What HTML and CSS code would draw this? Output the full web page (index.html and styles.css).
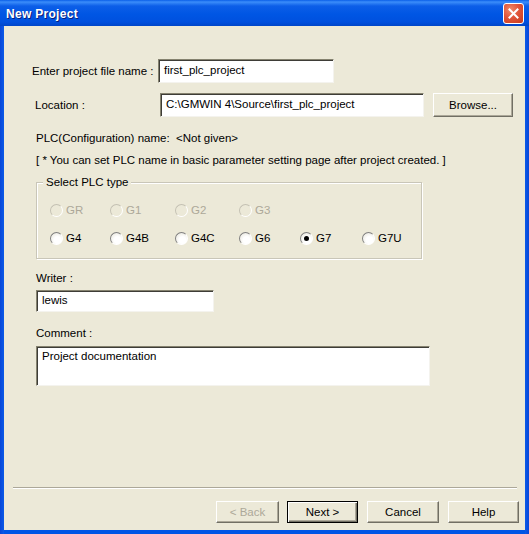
FILE: index.html
```html
<!DOCTYPE html>
<html>
<head>
<meta charset="utf-8">
<link rel="stylesheet" href="styles.css">
</head>
<body>
<div class="window">
  <div class="titlebar">
    <span class="title">New Project</span>
    <span class="close"><svg width="13" height="13" viewBox="0 0 13 13"><path d="M2.5 2.5 L10.5 10.5 M10.5 2.5 L2.5 10.5" stroke="#fff" stroke-width="2" stroke-linecap="square"/></svg></span>
  </div>
  <div class="client">
    <div class="main">
      <div class="row row1">
        <span class="lbl lbl1">Enter project file name :</span>
        <div class="field f1">first_plc_project</div>
      </div>
      <div class="row row2">
        <span class="lbl lbl2">Location :</span>
        <div class="field f2">C:\GMWIN 4\Source\first_plc_project</div>
        <div class="btn browse">Browse...</div>
      </div>
      <div class="text t1">PLC(Configuration) name:&nbsp;&nbsp;&lt;Not given&gt;</div>
      <div class="text t2">[ * You can set PLC name in basic parameter setting page after project created. ]</div>
      <div class="group">
        <div class="legend">Select PLC type</div>
        <div class="radios">
          <div class="opt dis"><span class="rb"></span>GR</div>
          <div class="opt dis"><span class="rb"></span>G1</div>
          <div class="opt dis"><span class="rb"></span>G2</div>
          <div class="opt dis"><span class="rb"></span>G3</div>
          <div class="opt"></div>
          <div class="opt"></div>
          <div class="opt"><span class="rb"></span>G4</div>
          <div class="opt"><span class="rb"></span>G4B</div>
          <div class="opt"><span class="rb"></span>G4C</div>
          <div class="opt"><span class="rb"></span>G6</div>
          <div class="opt"><span class="rb on"></span>G7</div>
          <div class="opt"><span class="rb"></span>G7U</div>
        </div>
      </div>
      <div class="text t3">Writer :</div>
      <div class="field f3">lewis</div>
      <div class="text t4">Comment :</div>
      <div class="field f4">Project documentation</div>
    </div>
    <div class="footer">
      <div class="sep"></div>
      <div class="buttons">
        <div class="btn b-back dis">&lt; Back</div>
        <div class="btn b-next">Next &gt;</div>
        <div class="btn b-cancel">Cancel</div>
        <div class="btn b-help">Help</div>
      </div>
    </div>
  </div>
</div>
</body>
</html>
```

FILE: styles.css
```css
html, body {
  margin: 0;
  padding: 0;
  background: #ece9d8;
}
body {
  font-family: "Liberation Sans", Arial, sans-serif;
  font-size: 11.5px;
  color: #000;
}
.window {
  width: 529px;
  height: 534px;
  display: flex;
  flex-direction: column;
  background: linear-gradient(to right, #0846d8 0, #0a5ae8 4px, transparent 4px, transparent 525px, #0a5ae8 525px, #0846d8 529px);
  background-color: #0055e5;
}
.titlebar {
  height: 26px;
  flex: none;
  display: flex;
  align-items: center;
  justify-content: space-between;
  background: linear-gradient(to bottom, #0a5fe8 0, #3b8dfa 2px, #0c5ee8 6px, #0056e4 14px, #0050de 22px, #0046c8 26px);
  padding: 0 6px 0 6px;
}
.title {
  color: #fff;
  font-family: "Liberation Sans", Arial, sans-serif;
  font-weight: bold;
  font-size: 12px;
  letter-spacing: 0.3px;
  text-shadow: 1px 1px 0 #0a1e7a;
  margin-top: 1px;
}
.close {
  width: 19px;
  height: 19px;
  border: 1px solid #fff;
  border-radius: 3px;
  background: radial-gradient(circle at 35% 30%, #f08a6a 0, #e0553a 45%, #c7391c 100%);
  display: flex;
  align-items: center;
  justify-content: center;
  margin-right: -1px;
}
.client {
  flex: 1;
  margin: 0 4px 4px 4px;
  background: #ece9d8;
  display: flex;
  flex-direction: column;
}
.main {
  flex: 1;
  padding-left: 28px;
}
.row {
  display: flex;
  align-items: center;
  height: 24px;
}
.row1 { margin-top: 33px; }
.row2 { margin-top: 10px; }
.lbl1 { width: 126px; }
.lbl2 { width: 125px; margin-left: 3px; }
.field {
  box-sizing: border-box;
  background: #fff;
  border-top: 1px solid #85826f;
  border-left: 1px solid #85826f;
  border-right: 1px solid #f4f3ee;
  border-bottom: 1px solid #f4f3ee;
  box-shadow: inset 1px 1px 0 #3e3d37;
  padding: 2px 5px 0 5px;
  line-height: 14px;
  white-space: nowrap;
}
.f1 { width: 176px; height: 24px; padding-top: 3px; }
.f2 { width: 264px; height: 24px; padding-top: 3px; }
.btn {
  box-sizing: border-box;
  height: 22px;
  display: flex;
  align-items: center;
  justify-content: center;
  background: #ece9d8;
  border-top: 1px solid #fff;
  border-left: 1px solid #fff;
  border-right: 1px solid #716f64;
  border-bottom: 1px solid #716f64;
  box-shadow: inset -1px -1px 0 #aca899;
}
.browse { width: 80px; height: 24px; margin-left: 9px; }
.text {
  line-height: 14px;
  white-space: nowrap;
}
.t1 { margin-top: 14px; margin-left: 4px; }
.t2 { margin-top: 8px; margin-left: 4px; }
.group {
  margin-top: 15px;
  margin-left: 4px;
  width: 386px;
  box-sizing: border-box;
  border: 1px solid #c9c6b8;
  box-shadow: inset 1px 1px 0 #fff, 1px 1px 0 #fff;
  padding: 0 0 6px 0;
}
.legend {
  width: fit-content;
  margin-top: -8px;
  margin-left: 6px;
  padding: 0 3px;
  background: #ece9d8;
  line-height: 14px;
}
.radios {
  display: grid;
  grid-template-columns: 60px 65px 64px 61px 62px auto;
  grid-auto-rows: 28px;
  margin-top: 7px;
  padding-left: 13px;
}
.opt {
  display: flex;
  align-items: center;
  gap: 3px;
  line-height: 14px;
}
.opt.dis { color: #aca899; }
.rb {
  box-sizing: border-box;
  width: 13px;
  height: 13px;
  border-radius: 50%;
  border: 1px solid;
  border-color: #808080 #fff #fff #808080;
  background: radial-gradient(circle at 60% 65%, #fff 0, #fff 35%, #e4e2d6 100%);
  position: relative;
  flex: none;
}
.opt.dis .rb {
  background: #ece9d8;
  border-color: #c4c1b3 #fff #fff #c4c1b3;
}
.rb.on::after {
  content: "";
  position: absolute;
  left: 3px;
  top: 3px;
  width: 5px;
  height: 5px;
  border-radius: 50%;
  background: #000;
}
.t3 { margin-top: 12px; margin-left: 4px; }
.f3 {
  margin-top: 5px;
  margin-left: 4px;
  width: 178px;
  height: 22px;
}
.t4 { margin-top: 14px; margin-left: 4px; }
.f4 {
  margin-top: 6px;
  margin-left: 4px;
  width: 394px;
  height: 40px;
}
.footer {
  padding: 0 6px 7px 9px;
}
.sep {
  height: 1px;
  background: #aca899;
  border-bottom: 1px solid #fff;
  width: 504px;
}
.buttons {
  margin-top: 12px;
  display: flex;
  justify-content: flex-end;
  gap: 9px;
}
.b-back { width: 63px; color: #aca899; margin-right: -1px; }
.b-next {
  width: 71px;
  border: 1px solid #000;
  box-shadow: inset 1px 1px 0 #fff, inset -1px -1px 0 #716f64, inset -2px -2px 0 #aca899;
}
.b-cancel { width: 72px; }
.b-help { width: 71px; }
```
